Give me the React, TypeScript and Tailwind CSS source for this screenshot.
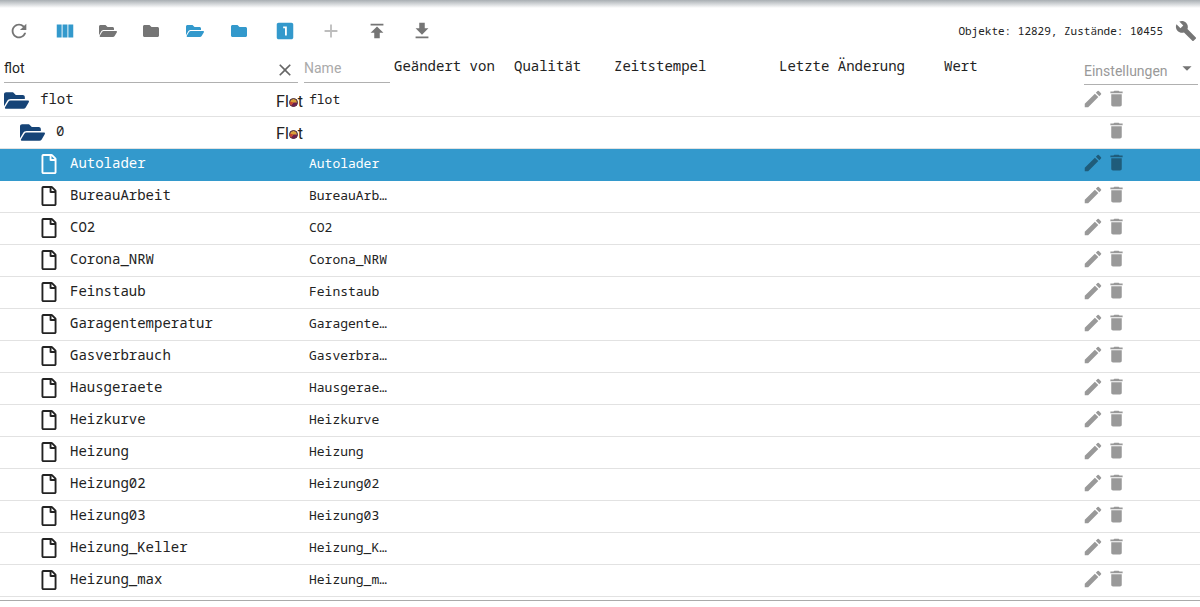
import React, { useState } from 'react';
import {
  MdRefresh, MdViewColumn, MdLooksOne, MdAdd, MdPublish, MdGetApp,
  MdBuild, MdClose, MdEdit, MdDelete, MdArrowDropDown,
} from 'react-icons/md';
import { FaFolder, FaFolderOpen, FaRegFile } from 'react-icons/fa';

type Row = { id: string; name?: string; kind: 'root' | 'instance' | 'file' };

const rows: Row[] = [
  { id: 'flot', name: 'flot', kind: 'root' },
  { id: '0', kind: 'instance' },
  ...[
    'Autolader', 'BureauArbeit', 'CO2', 'Corona_NRW', 'Feinstaub', 'Garagentemperatur',
    'Gasverbrauch', 'Hausgeraete', 'Heizkurve', 'Heizung', 'Heizung02', 'Heizung03',
    'Heizung_Keller', 'Heizung_max',
  ].map((id): Row => ({ id, name: id, kind: 'file' })),
];

const indent = { root: 'pl-1 gap-[11px]', instance: 'pl-5 gap-[11px]', file: 'pl-[39px] gap-[11px]' };

function FlotLogo() {
  return (
    <span className="-mr-[3px] flex items-center pt-0.5 font-['Roboto',sans-serif] text-base leading-5 text-[#222]">
      Fl
      <svg viewBox="0 0 18 18" className="mt-0.5 size-[9px]" aria-hidden="true">
        <circle cx="9" cy="9" r="8" fill="#d9a03a" stroke="#3b2340" strokeWidth="2" />
        <path d="M9 9L17 9A8 8 0 0 1 4 15.2Z" fill="#6b2050" />
        <path d="M9 9L4 15.2A8 8 0 0 1 1.5 7Z" fill="#c8452f" />
      </svg>
      t
    </span>
  );
}

function ToolButton({ label, className, children }: { label: string; className: string; children: React.ReactNode }) {
  return (
    <button type="button" aria-label={label} className={`flex h-6 w-6 items-center justify-center ${className}`}>
      {children}
    </button>
  );
}

export default function App() {
  const [filter, setFilter] = useState('flot');
  const [name, setName] = useState('');
  const [selected, setSelected] = useState('Autolader');

  return (
    <main className="bg-white font-['Noto_Sans_Mono','DejaVu_Sans_Mono',monospace] text-sm text-[#222]">
      <div className="h-2 bg-linear-to-b from-[#a9afb3] to-white" />
      <header className="flex h-[45px] items-center justify-between pr-[3px] pl-[7px]">
        <div className="flex items-center text-[#757575]">
          <ToolButton label="Aktualisieren" className=""><MdRefresh size={22} /></ToolButton>
          <ToolButton label="Spalten" className="ml-[22px] text-[#3399cc]"><MdViewColumn size={22} /></ToolButton>
          <ToolButton label="Alle aufklappen" className="ml-[19px]"><FaFolderOpen size={18} /></ToolButton>
          <ToolButton label="Alle zuklappen" className="ml-[19px]"><FaFolder size={16} /></ToolButton>
          <ToolButton label="Ebene aufklappen" className="ml-5 text-[#3399cc]"><FaFolderOpen size={18} /></ToolButton>
          <ToolButton label="Ebene zuklappen" className="ml-5 text-[#3399cc]"><FaFolder size={16} /></ToolButton>
          <ToolButton label="Ebene 1" className="ml-[22px] text-[#3399cc]"><MdLooksOne size={22} /></ToolButton>
          <ToolButton label="Objekt hinzufügen" className="ml-[22px] text-[#bdbdbd]"><MdAdd size={22} /></ToolButton>
          <ToolButton label="Hochladen" className="ml-[22px]"><MdPublish size={22} /></ToolButton>
          <ToolButton label="Herunterladen" className="ml-[21px]"><MdGetApp size={22} /></ToolButton>
        </div>
        <div className="flex items-center gap-3">
          <span className="text-[11px] leading-4">Objekte: 12829, Zustände: 10455</span>
          <button type="button" aria-label="Objekt bearbeiten" className="text-[#757575]"><MdBuild size={22} /></button>
        </div>
      </header>

      <table className="w-full table-fixed border-separate border-spacing-0 text-left">
        <colgroup>
          <col className="w-[300px]" />
          <col className="w-[94px]" />
          <col className="w-[120px]" />
          <col className="w-[100px]" />
          <col className="w-[165px]" />
          <col className="w-[165px]" />
          <col />
          <col className="w-[116px]" />
        </colgroup>
        <thead>
          <tr className="h-8 [&>th]:p-0 [&>th]:align-top [&>th]:font-normal">
            <th>
              <div className="mr-0.5 ml-1 flex h-[30px] items-center border-b border-[#b0b0b0]">
                <input
                  aria-label="ID"
                  value={filter}
                  onChange={(e) => setFilter(e.target.value)}
                  className="min-w-0 flex-1 font-['Roboto',sans-serif] text-sm outline-none"
                />
                <button type="button" aria-label="Filter löschen" onClick={() => setFilter('')} className="mt-1 mr-[3px] text-[#666]">
                  <MdClose size={20} />
                </button>
              </div>
            </th>
            <th>
              <div className="mr-1 ml-1 flex h-[30px] items-center border-b border-[#b0b0b0]">
                <input
                  aria-label="Name"
                  placeholder="Name"
                  value={name}
                  onChange={(e) => setName(e.target.value)}
                  className="w-full font-['Roboto',sans-serif] text-sm outline-none placeholder:text-[#aaa]"
                />
              </div>
            </th>
            <th className="leading-[26px]">Geändert von</th>
            <th className="leading-[26px]">Qualität</th>
            <th className="leading-[26px]">Zeitstempel</th>
            <th className="leading-[26px]">Letzte Änderung</th>
            <th className="leading-[26px]">Wert</th>
            <th>
              <div className="relative mr-0.5 flex h-8 items-center border-b border-[#b0b0b0] pt-1">
                <select aria-label="Einstellungen" className="w-full appearance-none font-['Roboto',sans-serif] text-sm text-[#999] outline-none">
                  <option>Einstellungen</option>
                </select>
                <MdArrowDropDown size={22} className="pointer-events-none absolute top-1 right-0 text-[#757575]" />
              </div>
            </th>
          </tr>
        </thead>
        <tbody>
          {rows.map((row) => {
            const active = row.id === selected;
            return (
              <tr
                key={row.id}
                onClick={() => setSelected(row.id)}
                className={`h-8 [&>td]:border-b [&>td]:p-0 ${active ? 'bg-[#3399cc] text-white [&>td]:border-[#3399cc]' : '[&>td]:border-[#e2e2e2]'}`}
              >
                <td>
                  <div className={`flex h-[31px] items-center ${indent[row.kind]}`}>
                    {row.kind === 'file'
                      ? <FaRegFile size={20} className="mb-px shrink-0" />
                      : <FaFolderOpen size={25} className="shrink-0 text-[#164477]" />}
                    <span className="min-w-0 flex-1 truncate pb-[3px] leading-5">{row.id}</span>
                    {row.kind !== 'file' && <FlotLogo />}
                  </div>
                </td>
                <td>
                  <div className="truncate pr-1 pb-[3px] pl-[9px] text-[13px] leading-5">{row.name}</div>
                </td>
                <td /><td /><td /><td /><td />
                <td>
                  <div className={`flex h-[31px] items-center gap-0.5 pb-1 ${active ? 'text-[#1f5c7a]' : 'text-[#999]'}`}>
                    <span className="-ml-0.5 w-[22px]">
                      {row.kind !== 'instance' && (
                        <button type="button" aria-label={`${row.id} bearbeiten`} className="block"><MdEdit size={22} /></button>
                      )}
                    </span>
                    <button type="button" aria-label={`${row.id} löschen`} className="block"><MdDelete size={21} /></button>
                  </div>
                </td>
              </tr>
            );
          })}
        </tbody>
      </table>
      <div className="mt-[3px] h-px bg-[#aaa]" />
    </main>
  );
}
